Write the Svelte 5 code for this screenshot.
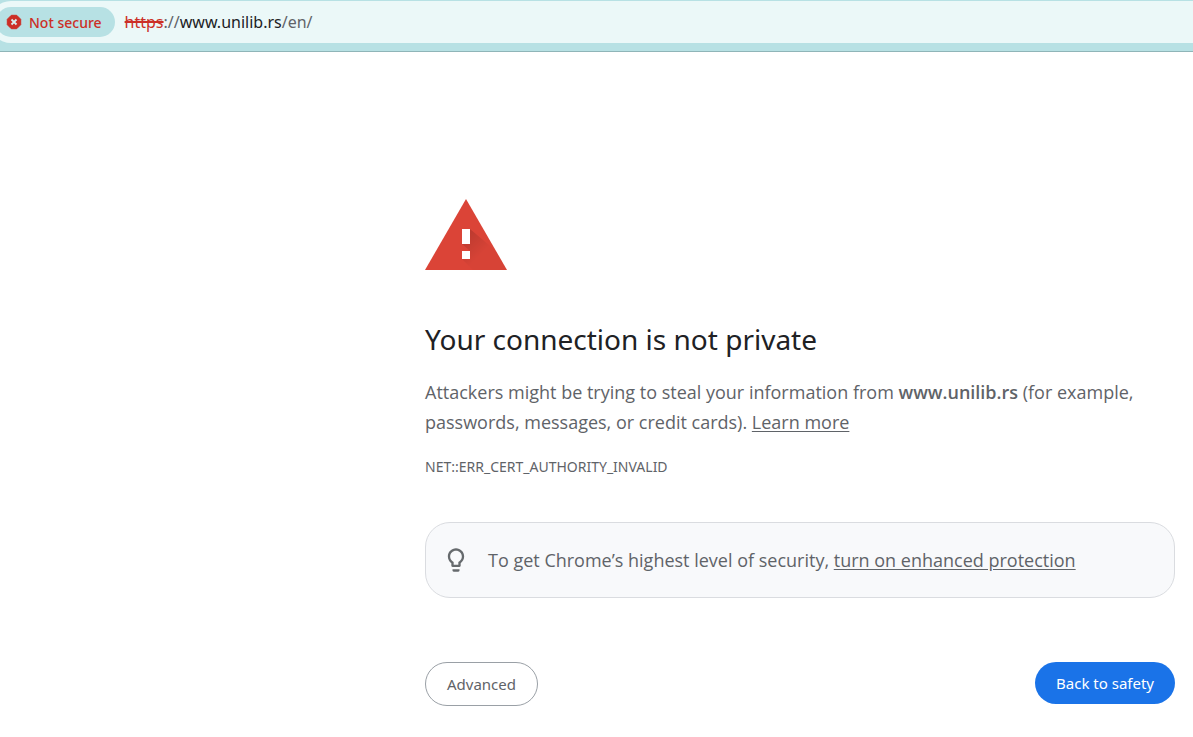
<script>
    const host = 'www.unilib.rs';
    const path = '/en/';
    const errorCode = 'NET::ERR_CERT_AUTHORITY_INVALID';

    let showAdvanced = $state(false);

    function goBack() {
        history.back();
    }
</script>

<div class="page">
    <header class="toolbar">
        <div class="omnibox">
            <button type="button" class="security-chip">
                <svg width="16" height="16" viewBox="0 0 16 16" aria-hidden="true">
                    <path d="M5.3 1.3h5.400l4 4v5.400l-4 4H5.300l-4-4V5.300z" fill="#cc2f26" stroke="#cc2f26" stroke-width="1" stroke-linejoin="round" />
                    <path d="M5.500 5.500l5 5M10.500 5.500l-5 5" stroke="#d9f0f0" stroke-width="1.800" />
                </svg>
                <span>Not secure</span>
            </button>
            <div class="url" role="textbox" tabindex="0" contenteditable="true" spellcheck="false" aria-label="Address bar"><span class="scheme">https</span>://<span class="host">{host}</span>{path}</div>
        </div>
    </header>

    <main class="interstitial">
        <svg class="warning-icon" width="82" height="71" viewBox="0 0 82 71" aria-hidden="true">
            <defs>
                <linearGradient id="shade" gradientUnits="userSpaceOnUse" x1="41" y1="36" x2="58" y2="53">
                    <stop offset="0" stop-color="#000" stop-opacity="0.140" />
                    <stop offset="1" stop-color="#000" stop-opacity="0.020" />
                </linearGradient>
            </defs>
            <path d="M41 0l41 71H0z" fill="#db4437" />
            <path d="M45 30l26 22 11 19H48L37 60l8-8-8-7z" fill="url(#shade)" />
            <path d="M37 30h8v15h-8zM37 52h8v8h-8z" fill="#fff" />
        </svg>

        <h1>Your connection is not private</h1>
        <p>
            Attackers might be trying to steal your information from <strong>{host}</strong> (for example, passwords, messages, or credit cards). <a href="#learn-more">Learn more</a>
        </p>
        <div class="error-code">{errorCode}</div>

        <div class="promo">
            <svg width="28" height="28" viewBox="0 0 24 24" aria-hidden="true">
                <path d="M9 21c0 .5.4 1 1 1h4c.6 0 1-.5 1-1v-1H9v1zm3-19C8.100 2 5 5.100 5 9c0 2.400 1.200 4.500 3 5.700V17c0 .5.4 1 1 1h6c.6 0 1-.5 1-1v-2.300c1.800-1.300 3-3.400 3-5.700 0-3.900-3.100-7-7-7zm2.900 11.100l-.9.600V16h-4v-2.300l-.9-.6C7.800 12.200 7 10.600 7 9c0-2.800 2.200-5 5-5s5 2.200 5 5c0 1.600-.8 3.200-2.100 4.100z" fill="#666a6d" />
            </svg>
            <p>To get Chrome’s highest level of security, <a href="#enhanced-protection">turn on enhanced protection</a></p>
        </div>

        <div class="actions">
            <button type="button" class="btn btn-secondary" aria-expanded={showAdvanced} onclick={() => (showAdvanced = !showAdvanced)}>Advanced</button>
            <button type="button" class="btn btn-primary" onclick={goBack}>Back to safety</button>
        </div>

        {#if showAdvanced}
            <p class="details">This server could not prove that it is <strong>{host}</strong>.</p>
        {/if}
    </main>
</div>

<style>
    :global(body) {
        margin: 0;
        background: #fff;
    }
    .page {
        font-family: "Noto Sans", "Open Sans", sans-serif;
        color: #5f6368;
    }

    .toolbar {
        padding: 1px 0 8px;
        background: #b7e1e4;
        border-bottom: 1px solid #8fb5b8;
        overflow: hidden;
    }
    .omnibox {
        display: flex;
        align-items: center;
        gap: 10px;
        height: 42px;
        margin-left: -10px;
        padding-left: 6px;
        background: #ebf8f8;
        border-radius: 21px 0 0 21px;
    }
    .security-chip {
        display: flex;
        align-items: center;
        gap: 7px;
        height: 30px;
        padding: 0 13px 0 10px;
        border: 0;
        border-radius: 15px;
        background: #b7e1e4;
        color: #cc2f26;
        font-family: inherit;
        font-size: 14px;
        font-weight: 500;
        white-space: nowrap;
        cursor: pointer;
    }
    .url {
        flex: 1;
        font-size: 16px;
        line-height: 24px;
        outline: none;
        white-space: nowrap;
    }
    .scheme {
        color: #cc2f26;
        text-decoration: line-through 2px;
    }
    .host {
        color: #202124;
    }

    .interstitial {
        box-sizing: border-box;
        max-width: 750px;
        margin: 147px 18px 0 auto;
        font-size: 18px;
        line-height: 30px;
    }
    .warning-icon {
        display: block;
        margin-bottom: 49px;
    }
    h1 {
        margin: 0 0 18px;
        color: #202124;
        font-size: 28px;
        font-weight: 400;
        line-height: 40px;
    }
    p {
        margin: 0;
        font-family: "Open Sans", "Noto Sans", sans-serif;
    }
    strong {
        font-weight: 600;
    }
    a {
        color: inherit;
        text-underline-offset: 2px;
    }
    .error-code {
        margin-top: 20px;
        font-size: 14px;
        line-height: 20px;
    }
    .promo {
        display: flex;
        align-items: center;
        gap: 18px;
        margin-top: 45px;
        padding: 22px 16px;
        border: 1px solid #dadce0;
        border-radius: 25px;
        background: #f8f9fb;
    }
    .promo svg {
        flex: none;
    }
    .actions {
        display: flex;
        align-items: flex-start;
        justify-content: space-between;
        margin-top: 64px;
    }
    .btn {
        padding: 10px 21px;
        border: 0;
        border-radius: 22px;
        font-family: inherit;
        font-size: 15px;
        line-height: 22px;
        cursor: pointer;
    }
    .btn-secondary {
        border: 1px solid #9aa0a6;
        background: #fff;
        color: #5f6368;
    }
    .btn-primary {
        background: #1a73e8;
        color: #fff;
    }
    .details {
        margin-top: 30px;
    }
</style>
